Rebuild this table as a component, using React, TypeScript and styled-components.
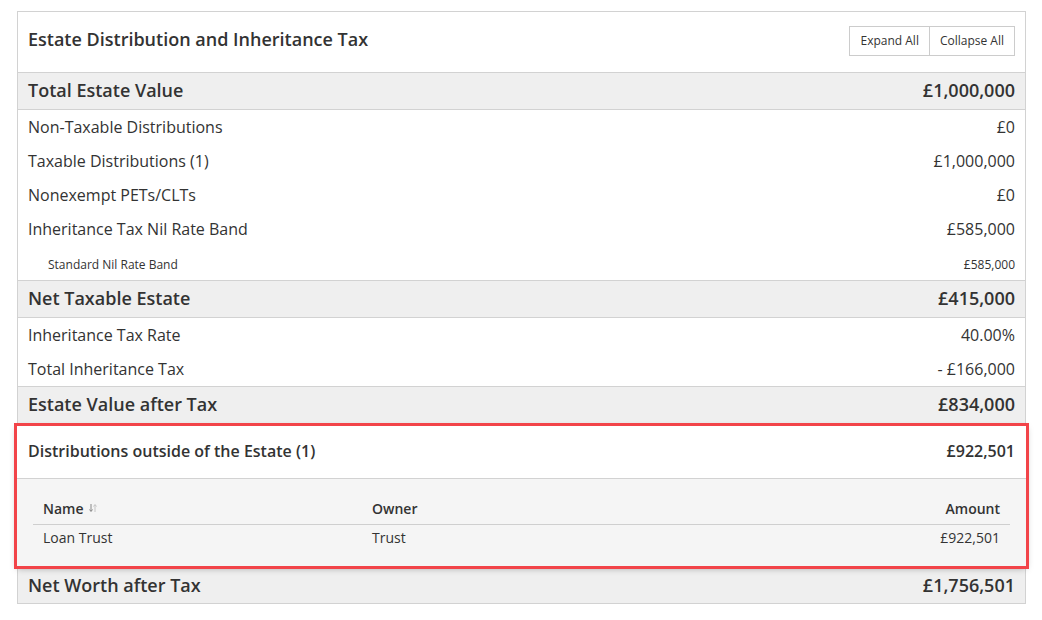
import React from "react";
import styled, { createGlobalStyle } from "styled-components";

const Global = createGlobalStyle`
  html, body { margin: 0; padding: 0; background: #fff; }
  body { font-family: "Open Sans", "Noto Sans", sans-serif; color: #333; }
  * { box-sizing: border-box; }
`;

const Page = styled.div`
  padding: 11px 0 0 17px;
`;

const Panel = styled.div`
  width: 1009px;
  border: 1px solid #d2d2d2;
  background: #fff;
`;

const Header = styled.div`
  height: 61px;
  display: flex;
  align-items: center;
  justify-content: space-between;
  padding: 0 10px 4px;
  border-bottom: 1px solid #d2d2d2;
`;

const Title = styled.h1`
  margin: 0;
  font-size: 18px;
  font-weight: 600;
  color: #333;
  margin-top: -3px;
`;

const ButtonGroup = styled.div`
  display: flex;
  margin-top: 2px;
`;

const Button = styled.button`
  font-family: "Open Sans", sans-serif;
  font-size: 12px;
  color: #333;
  background: #fff;
  border: 1px solid #ccc;
  height: 30px;
  padding: 0 10px 2px;
  cursor: pointer;
  & + & { margin-left: -1px; }
`;

const SummaryRow = styled.div<{ $height?: number; $last?: boolean }>`
  height: ${(p) => p.$height ?? 37}px;
  display: flex;
  align-items: center;
  justify-content: space-between;
  padding: 0 10px 2px;
  background: #efefef;
  border-bottom: ${(p) => (p.$last ? "none" : "1px solid #d2d2d2")};
  font-size: 18px;
  font-weight: 600;
  color: #333;
`;

const Row = styled.div<{ $small?: boolean }>`
  height: 34px;
  display: flex;
  align-items: center;
  justify-content: space-between;
  padding: ${(p) => (p.$small ? "2px 10px 0 30px" : "0 10px")};
  font-size: ${(p) => (p.$small ? 12 : 16)}px;
  color: #333;
`;

const Group = styled.div`
  border-bottom: 1px solid #d2d2d2;
`;

const Section = styled.section`
  margin: 3px -1px 2px;
  outline: 3px solid #f24449;
  box-shadow: 0 2px 7px rgba(0, 0, 0, 0.35);
  position: relative;
  background: #fff;
`;

const SectionHeader = styled.div`
  height: 53px;
  display: flex;
  align-items: center;
  justify-content: space-between;
  padding: 0 11px 2px 11px;
  border-bottom: 1px solid #d2d2d2;
  font-size: 16px;
  font-weight: 600;
  color: #333;
`;

const TableArea = styled.div`
  background: #f5f5f5;
  padding: 15px 16px 14px 16px;
`;

const TableRow = styled.div<{ $head?: boolean }>`
  display: grid;
  grid-template-columns: 329px 1fr 1fr;
  align-items: center;
  height: ${(p) => (p.$head ? 31 : 27)}px;
  padding-bottom: 2px;
  border-bottom: ${(p) => (p.$head ? "1px solid #cfcfcf" : "none")};
  font-size: 14px;
  font-weight: ${(p) => (p.$head ? 600 : 400)};
  color: #333;
`;

const Cell = styled.div<{ $right?: boolean }>`
  padding: 0 10px;
  text-align: ${(p) => (p.$right ? "right" : "left")};
  display: flex;
  align-items: center;
  justify-content: ${(p) => (p.$right ? "flex-end" : "flex-start")};
`;

const SortIcon = () => (
  <svg width="8" height="10" viewBox="0 0 8 10" style={{ marginLeft: 5 }}>
    <path d="M2 1 V8 M0.5 6.5 L2 8.5 L3.5 6.5" stroke="#888" strokeWidth="1" fill="none" />
    <path d="M6 9 V2 M4.5 3.5 L6 1.5 L7.5 3.5" stroke="#c4c4c4" strokeWidth="1" fill="none" />
  </svg>
);

export default function App() {
  return (
    <>
      <Global />
      <Page>
        <Panel>
          <Header>
            <Title>Estate Distribution and Inheritance Tax</Title>
            <ButtonGroup>
              <Button>Expand All</Button>
              <Button>Collapse All</Button>
            </ButtonGroup>
          </Header>
          <SummaryRow>
            <span>Total Estate Value</span>
            <span>£1,000,000</span>
          </SummaryRow>
          <Group>
            <Row><span>Non-Taxable Distributions</span><span>£0</span></Row>
            <Row><span>Taxable Distributions (1)</span><span>£1,000,000</span></Row>
            <Row><span>Nonexempt PETs/CLTs</span><span>£0</span></Row>
            <Row><span>Inheritance Tax Nil Rate Band</span><span>£585,000</span></Row>
            <Row $small><span>Standard Nil Rate Band</span><span>£585,000</span></Row>
          </Group>
          <SummaryRow>
            <span>Net Taxable Estate</span>
            <span>£415,000</span>
          </SummaryRow>
          <Group>
            <Row><span>Inheritance Tax Rate</span><span>40.00%</span></Row>
            <Row><span>Total Inheritance Tax</span><span>- £166,000</span></Row>
          </Group>
          <SummaryRow $height={36} $last>
            <span>Estate Value after Tax</span>
            <span>£834,000</span>
          </SummaryRow>
          <Section>
            <SectionHeader>
              <span>Distributions outside of the Estate (1)</span>
              <span>£922,501</span>
            </SectionHeader>
            <TableArea>
              <TableRow $head>
                <Cell>Name<SortIcon /></Cell>
                <Cell>Owner</Cell>
                <Cell $right>Amount</Cell>
              </TableRow>
              <TableRow>
                <Cell>Loan Trust</Cell>
                <Cell>Trust</Cell>
                <Cell $right>£922,501</Cell>
              </TableRow>
            </TableArea>
          </Section>
          <SummaryRow $height={35} $last>
            <span>Net Worth after Tax</span>
            <span>£1,756,501</span>
          </SummaryRow>
        </Panel>
      </Page>
    </>
  );
}
